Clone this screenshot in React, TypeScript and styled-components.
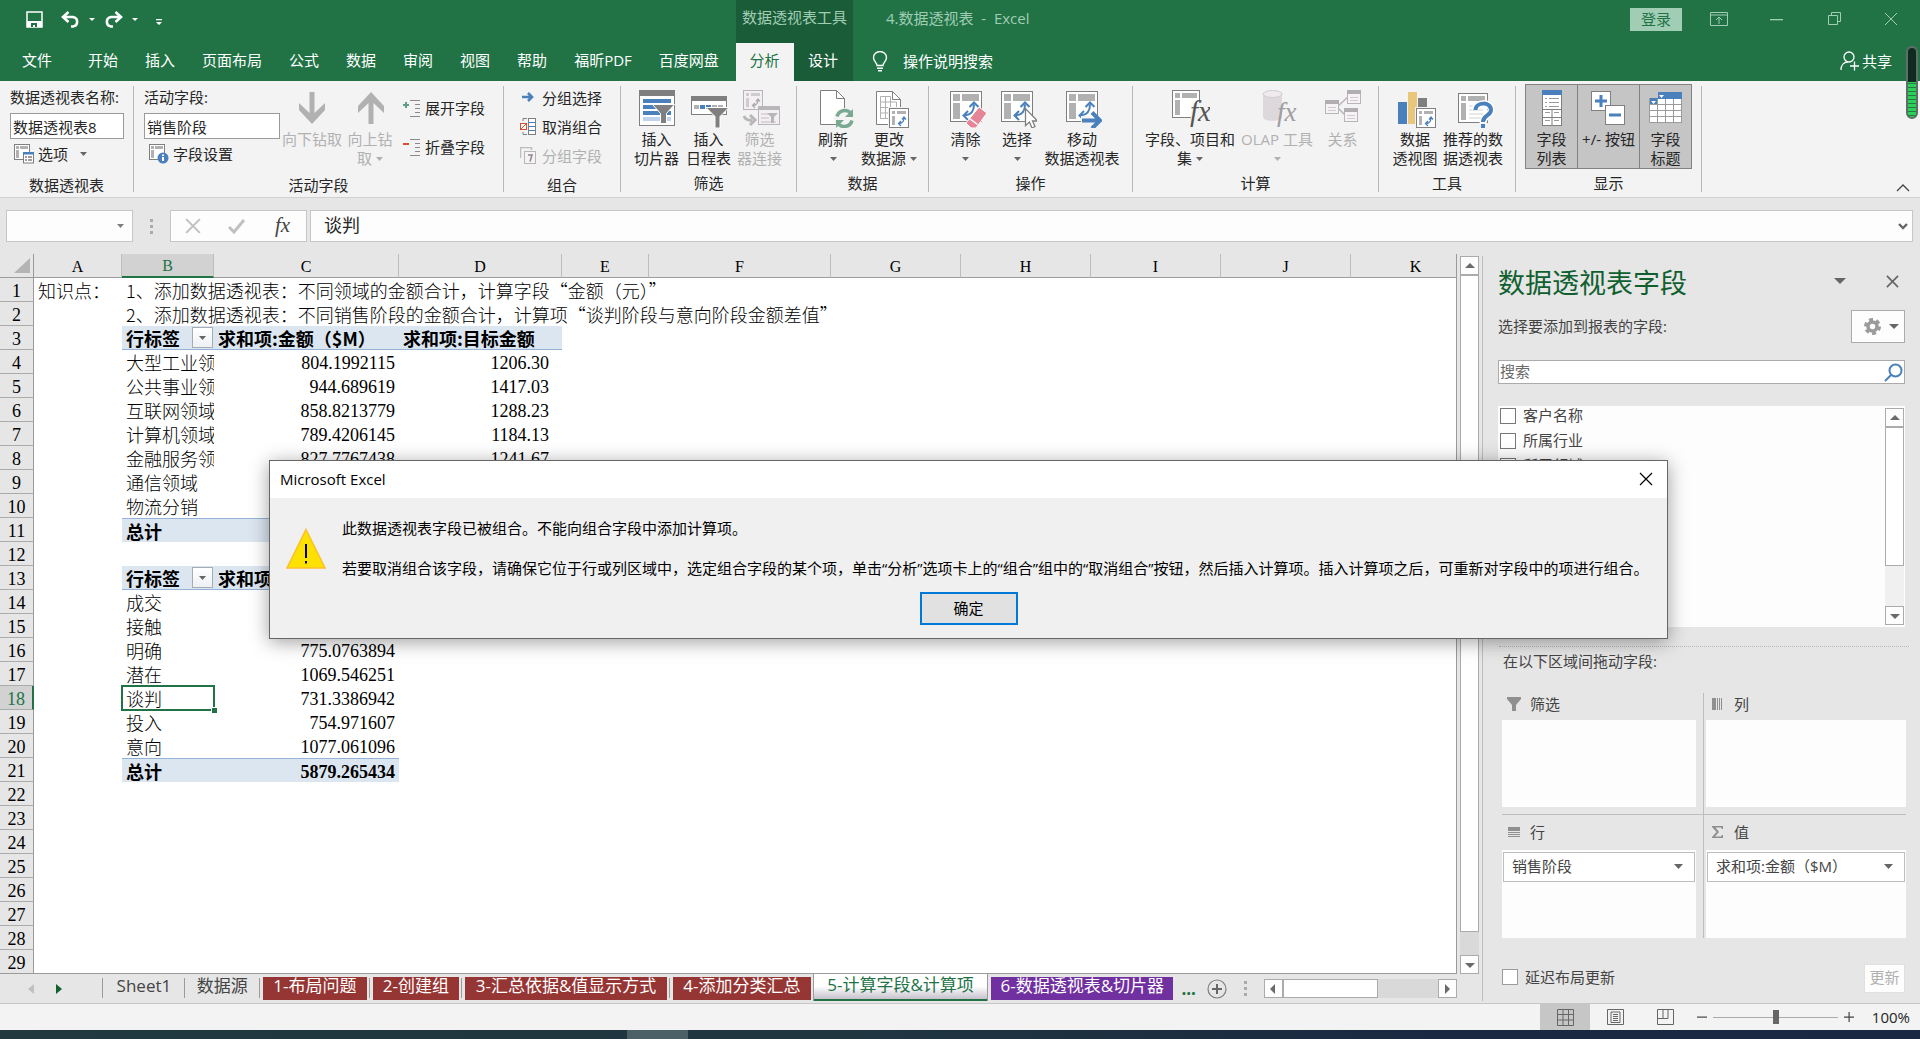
import React from "react";
import styled, { createGlobalStyle, css } from "styled-components";

const ui = `"Open Sans", "Noto Sans CJK SC", sans-serif`;
const cjk = `"Noto Sans CJK SC", sans-serif`;
const serif = `"Liberation Serif", "Noto Sans CJK SC", serif`;

const c = {
  green: "#217346",
  darkGreen: "#1b5c38",
  mint: "#a0cdb4",
  ribbon: "#f3f3f3",
  chrome: "#e6e6e6",
  line: "#ababab",
  text: "#262626",
  soft: "#444444",
  off: "#b1b1b1",
  grey: "#7f7f7f",
  blue: "#4a80bb",
  pivot: "#dce6f1",
  pivotLine: "#95b3d7",
};

const Global = createGlobalStyle`
  *, *::before, *::after { box-sizing: border-box; }
  body { margin: 0; font: 15px/20px ${ui}; color: ${c.text}; overflow: hidden; }
  button, input { font: inherit; color: inherit; }
  button { background: none; border: 0; padding: 0; white-space: nowrap; }
  svg { display: block; flex: none; }
`;

const Screen = styled.div`
  position: relative;
  display: flex;
  flex-direction: column;
  min-height: 100vh;
  background: ${c.chrome};
`;

/* ---------- header ---------- */

const Header = styled.header`
  display: grid;
  grid-template: 43px 38px / 736px 117px 1fr;
  background: ${c.green};
  color: #fff;
`;
const QuickAccess = styled.div`
  display: flex;
  align-items: center;
  padding: 0 0 4px 26px;
  gap: 9px;
  & > :first-child { margin-right: 9px; }
`;
const IconButton = styled.button`
  display: flex;
  align-items: center;
  justify-content: center;
`;
const ContextTitle = styled.div`
  background: ${c.darkGreen};
  color: ${c.mint};
  text-align: center;
  line-height: 34px;
`;
const TitleBar = styled.div`
  display: flex;
  align-items: center;
  padding: 0 22px 5px 33px;
  color: ${c.mint};
`;
const DocTitle = styled.span`
  flex: 1;
  padding-bottom: 2px;
  white-space: pre;
`;
const LoginButton = styled.button`
  background: ${c.mint};
  color: ${c.green};
  width: 52px;
  height: 23px;
  line-height: 22px;
`;
const WindowButtons = styled.div`
  display: flex;
  gap: 41px;
  margin-left: 28px;
`;
const Tabs = styled.nav`
  display: flex;
`;
const Tab = styled.button<{ $active?: boolean; $file?: boolean }>`
  padding: 0 14px 4px 13px;
  ${(p) => p.$file && "width: 75px;"}
  ${(p) => p.$active && `background: ${c.ribbon}; color: ${c.green};`}
`;
const ContextTabs = styled.div`
  display: grid;
  grid-template-columns: 58px 59px;
  background: ${c.darkGreen};
`;
const TellRow = styled.div`
  display: flex;
  align-items: center;
  justify-content: space-between;
  padding: 0 28px 2px 19px;
`;
const TellButton = styled.button`
  display: flex;
  align-items: center;
  gap: 15px;
`;
const ShareButton = styled(TellButton)`
  gap: 3px;
`;

/* ---------- ribbon ---------- */

const Ribbon = styled.section`
  display: flex;
  height: 117px;
  padding-top: 3px;
  background: ${c.ribbon};
  border-bottom: 1px solid #d0d0d0;
`;
const GroupBox = styled.div<{ $w: number }>`
  width: ${(p) => p.$w}px;
  display: flex;
  flex-direction: column;
`;
const GroupBody = styled.div<{ $pad: number }>`
  display: flex;
  height: 87px;
  padding-left: ${(p) => p.$pad}px;
`;
const GroupLabel = styled.div`
  text-align: center;
  line-height: 28px;
`;
const Sep = styled.div`
  width: 1px;
  margin: 2px 0 5px;
  background: #b8b8b8;
`;
const Big = styled.button<{ $w: number; $off?: boolean; $on?: boolean }>`
  width: ${(p) => p.$w}px;
  display: flex;
  flex-direction: column;
  align-items: center;
  padding-top: 6px;
  line-height: 19px;
  color: ${(p) => (p.$off ? c.off : c.text)};
  ${(p) =>
    p.$on &&
    css`
      background: #c5c5c5;
      border: 1px solid #828282;
      padding-top: 5px;
      & + & { margin-left: -1px; }
    `}
  & > svg { margin-bottom: 2px; }
`;
const BigLine = styled.span`
  display: flex;
  align-items: center;
  justify-content: center;
  gap: 4px;
  height: 19px;
`;
const Stack = styled.div<{ $w?: number; $pad?: number }>`
  display: flex;
  flex-direction: column;
  width: ${(p) => (p.$w ? p.$w + "px" : "auto")};
  padding-left: ${(p) => p.$pad ?? 0}px;
`;
const FieldLabel = styled.label`
  line-height: 26px;
  height: 30px;
  white-space: nowrap;
`;
const FieldInput = styled.input`
  width: 100%;
  height: 26px;
  padding: 0 2px;
  border: 1px solid #9a9a9a;
  background: #fff;
  outline: 0;
`;
const Small = styled.button<{ $off?: boolean; $h?: number; $gap?: number; $pad?: number }>`
  display: flex;
  align-items: center;
  gap: ${(p) => p.$gap ?? 4}px;
  height: ${(p) => p.$h ?? 29}px;
  padding: 0 0 2px ${(p) => p.$pad ?? 0}px;
  color: ${(p) => (p.$off ? c.off : c.text)};
`;
const SmallText = styled.span`
  margin-right: 8px;
`;
const Collapse = styled.button`
  margin: auto 10px 5px auto;
`;
const Meter = styled.div`
  position: absolute;
  top: 46px;
  right: 2px;
  width: 12px;
  height: 73px;
  border: 2px solid #5f6f67;
  border-radius: 6px;
  background:
    linear-gradient(#0f2b1f 34px, transparent 34px),
    repeating-linear-gradient(#2fd05a 0 3px, #1d7a44 3px 4px);
`;

/* ---------- formula bar ---------- */

const FormulaRow = styled.div`
  display: flex;
  height: 56px;
  padding: 12px 7px 12px 6px;
`;
const BarBox = styled.div`
  display: flex;
  align-items: center;
  background: #fdfdfd;
  border: 1px solid #c6c6c6;
`;
const NameBox = styled(BarBox)`
  width: 127px;
  padding-right: 8px;
`;
const Grip = styled.div`
  display: flex;
  flex-direction: column;
  justify-content: center;
  gap: 3px;
  width: 37px;
  align-items: center;
  & > i { width: 3px; height: 3px; background: #ababab; }
`;
const FxBox = styled(BarBox)`
  width: 137px;
  justify-content: space-between;
  padding: 0 15px 0 14px;
  margin-right: 3px;
`;
const FormulaBox = styled(BarBox)`
  flex: 1;
  padding: 0 4px 0 13px;
`;
const PlainInput = styled.input`
  flex: 1;
  min-width: 0;
  border: 0;
  padding: 0 0 2px;
  background: none;
  outline: 0;
  font-size: 18px;
  line-height: 26px;
`;

/* ---------- sheet ---------- */

const Workspace = styled.main`
  flex: 1;
  display: flex;
`;
const SheetSide = styled.section`
  flex: 1;
  min-width: 0;
  display: flex;
  flex-direction: column;
`;
const SheetRow = styled.div`
  display: flex;
  height: 720px;
`;
const GridFrame = styled.div`
  flex: 1;
  min-width: 0;
  overflow: hidden;
  background: #fff;
  border: solid #9b9b9b;
  border-width: 0 1px 1px 0;
`;
const Grid = styled.table`
  table-layout: fixed;
  width: 1481px;
  border-spacing: 0;
  font: 300 18px/22px ${cjk};
  color: #000;
`;
const Corner = styled.td`
  height: 24px;
  padding: 4px 3px 4px 14px;
  background: ${c.chrome};
  border: solid #9b9b9b;
  border-width: 0 1px 1px 0;
`;
const ColHead = styled.th<{ $on?: boolean }>`
  height: 24px;
  padding: 2px 0 0;
  font: 16px/20px ${serif};
  background: ${(p) => (p.$on ? "#d2d2d2" : c.chrome)};
  color: ${(p) => (p.$on ? c.green : "#000")};
  border-right: 1px solid #bdbdbd;
  border-bottom: ${(p) => (p.$on ? `2px solid ${c.green}` : "1px solid #9b9b9b")};
`;
const RowHead = styled.th<{ $on?: boolean }>`
  height: 24px;
  padding: 2px 0 0;
  font: 18px/20px ${serif};
  background: ${(p) => (p.$on ? "#d2d2d2" : c.chrome)};
  color: ${(p) => (p.$on ? c.green : "#000")};
  border-bottom: 1px solid #ababab;
  border-right: ${(p) => (p.$on ? `2px solid ${c.green}` : "1px solid #9b9b9b")};
`;
type CellKind = "head" | "total" | undefined;
const Cell = styled.td<{ $kind?: CellKind; $num?: boolean; $clip?: boolean; $indent?: boolean }>`
  height: 24px;
  padding: 0 ${(p) => (p.$indent ? 13 : 4)}px 0 4px;
  white-space: nowrap;
  overflow: ${(p) => (p.$clip ? "hidden" : "visible")};
  ${(p) => p.$num && `text-align: right; font-family: ${serif}; line-height: 20px; padding-top: 2px;`}
  ${(p) => p.$kind && `background: ${c.pivot}; font-weight: 700;`}
  ${(p) => p.$kind === "head" && `border-bottom: 1px solid ${c.pivotLine};`}
  ${(p) => p.$kind === "total" && `border-top: 1px solid ${c.pivotLine};`}
`;
const SelectedCell = styled(Cell)`
  position: relative;
  outline: 2px solid ${c.green};
  outline-offset: -1px;
  &::after {
    content: "";
    position: absolute;
    right: -3px;
    bottom: -3px;
    width: 6px;
    height: 6px;
    background: ${c.green};
    border: solid #fff;
    border-width: 1px 0 0 1px;
  }
`;
const HeadWithFilter = styled.div`
  display: flex;
  align-items: center;
  justify-content: space-between;
  height: 22px;
  margin-right: -3px;
`;
const FilterButton = styled.button`
  display: flex;
  align-items: center;
  justify-content: center;
  width: 21px;
  height: 21px;
  border: 1px solid #a6acb5;
  background: linear-gradient(#fff, #eef0f4);
`;
const VScroll = styled.div`
  display: flex;
  flex-direction: column;
  width: 19px;
  margin: 2px 3px 0;
  background: #d9d9d9;
`;
const ScrollButton = styled.button`
  display: flex;
  align-items: center;
  justify-content: center;
  width: 19px;
  height: 19px;
  flex: none;
  background: #fdfdfd;
  border: 1px solid #ababab;
`;
const ThumbV = styled.div<{ $grow: number }>`
  flex: ${(p) => p.$grow};
  background: #fff;
  border: 1px solid #ababab;
`;
const Track = styled.div<{ $grow: number }>`
  flex: ${(p) => p.$grow};
`;
const TabBar = styled.div`
  display: flex;
  flex: 1;
  padding: 0 25px 0 28px;
  font-size: 17px;
`;
const TabNav = styled.div`
  display: flex;
  gap: 22px;
  width: 75px;
  height: 29px;
  align-items: center;
`;
const SheetTab = styled.button<{ $w: number; $bg?: string }>`
  width: ${(p) => p.$w}px;
  height: 23px;
  margin: 3px 2px 0 3px;
  line-height: 17px;
  padding-bottom: 6px;
  color: ${(p) => (p.$bg ? "#fff" : c.soft)};
  background: ${(p) => p.$bg ?? "transparent"};
`;
const TabSep = styled.i`
  width: 1px;
  height: 20px;
  margin-top: 4px;
  background: #9b9b9b;
`;
const ActiveTab = styled.button`
  width: 177px;
  height: 27px;
  line-height: 20px;
  color: ${c.green};
  background: linear-gradient(#fff 45%, #bdb8c4);
  border: solid #9b9b9b;
  border-width: 0 1px 0;
  box-shadow: inset 0 -2px ${c.green};
  padding-bottom: 5px;
`;
const TabTools = styled.div`
  display: flex;
  align-items: center;
  flex: 1;
  height: 29px;
  padding-left: 6px;
  color: ${c.green};
  font-weight: 700;
`;
const NewSheet = styled(IconButton)`
  margin-left: 11px;
`;
const HScroll = styled.div`
  display: flex;
  width: 193px;
  height: 19px;
  margin-left: auto;
  background: #d9d9d9;
`;

/* ---------- field pane ---------- */

const Pane = styled.aside`
  width: 438px;
  margin: 2px 0;
  padding: 10px 15px 0;
  border-left: 1px solid #bdbdbd;
  color: ${c.soft};
`;
const PaneHead = styled.div`
  display: flex;
  align-items: center;
  height: 36px;
  padding-right: 6px;
`;
const PaneTools = styled.div`
  display: flex;
  align-items: center;
  gap: 40px;
  padding-bottom: 6px;
`;
const PaneTitle = styled.h2`
  flex: 1;
  margin: 0;
  font: 27px/34px ${ui};
  padding-bottom: 2px;
  color: #10602f;
`;
const PaneRow = styled.div`
  display: flex;
  align-items: center;
  justify-content: space-between;
  height: 33px;
  margin: 8px 0 17px;
`;
const PaneHint = styled.span`
  padding-bottom: 2px;
`;
const GearButton = styled.button`
  display: flex;
  align-items: center;
  justify-content: space-between;
  width: 54px;
  height: 33px;
  padding: 0 5px 0 12px;
  background: #fdfdfd;
  border: 1px solid #ababab;
`;
const SearchBox = styled.div`
  display: flex;
  align-items: center;
  height: 24px;
  padding: 0 1px;
  background: #fff;
  border: 1px solid #ababab;
  & > input { font-size: 15px; line-height: 20px; }
  & > input::placeholder { color: #6a6a6a; opacity: 1; }
`;
const FieldList = styled.div`
  display: flex;
  height: 221px;
  margin-top: 22px;
  padding: 0 1px 2px 2px;
  background: #fdfdfd;
`;
const Checks = styled.div`
  flex: 1;
`;
const Check = styled.label`
  display: flex;
  align-items: center;
  gap: 7px;
  height: 25px;
  padding-bottom: 8px;
`;
const Box = styled.input`
  appearance: none;
  width: 16px;
  height: 16px;
  margin: 3px 0 0;
  background: #fff;
  border: 1px solid #777;
`;
const ListScroll = styled(VScroll)`
  margin: 2px 0 0;
  background: #f0f0f0;
`;
const DragHint = styled.div`
  margin: 19px -4px 0 1px;
  padding: 4px 4px 0;
  height: 47px;
  border-top: 1px dotted #b8b8b8;
`;
const Areas = styled.div`
  display: grid;
  grid-template-columns: 201px 1fr;
  margin: 0 -1px 0 4px;
`;
const Area = styled.div<{ $right?: boolean; $bottom?: boolean }>`
  height: ${(p) => (p.$bottom ? 123 : 122)}px;
  padding: ${(p) => (p.$right ? "0 0 0 2px" : "0 7px 0 0")};
  border: solid #bdbdbd;
  border-width: 0 0 ${(p) => (p.$bottom ? 0 : 1)}px ${(p) => (p.$right ? 1 : 0)}px;
`;
const AreaHead = styled.div<{ $bottom?: boolean }>`
  display: flex;
  align-items: center;
  gap: 9px;
  height: ${(p) => (p.$bottom ? 35 : 27)}px;
  padding: 0 0 ${(p) => (p.$bottom ? 2 : 6)}px 5px;
`;
const AreaDrop = styled.div<{ $bottom?: boolean }>`
  height: ${(p) => (p.$bottom ? 88 : 87)}px;
  padding: 2px 1px;
  background: #fdfdfd;
`;
const AreaItem = styled.button`
  display: flex;
  align-items: center;
  justify-content: space-between;
  width: 100%;
  height: 30px;
  padding: 0 11px 2px 8px;
  background: #fff;
  border: 1px solid #bdbdbd;
`;
const Defer = styled.div`
  display: flex;
  align-items: center;
  justify-content: space-between;
  margin: 25px 0 0 4px;
  height: 30px;
  & > label { padding: 0 0 2px; height: 30px; }
  & input { margin: 0; border-color: #9b9b9b; }
`;
const UpdateButton = styled.button`
  width: 41px;
  height: 29px;
  padding-bottom: 2px;
  background: #fdfdfd;
  border: 1px solid #e0e0e0;
  color: ${c.off};
`;

/* ---------- status and task bars ---------- */

const Status = styled.footer`
  display: flex;
  align-items: stretch;
  justify-content: flex-end;
  height: 27px;
  padding-right: 10px;
  background: ${c.ribbon};
  border-top: 1px solid #c6c6c6;
`;
const View = styled.button<{ $on?: boolean }>`
  display: flex;
  align-items: center;
  justify-content: center;
  width: 50px;
  background: ${(p) => (p.$on ? "#c6c6c6" : "transparent")};
`;
const Zoom = styled.div`
  display: flex;
  align-items: center;
  gap: 6px;
  margin-left: 7px;
`;
const Slider = styled.input`
  appearance: none;
  width: 125px;
  height: 16px;
  margin: 0;
  background: linear-gradient(#ababab, #ababab) center / 100% 1px no-repeat;
  &::-webkit-slider-thumb {
    appearance: none;
    width: 6px;
    height: 14px;
    background: #666;
  }
`;
const Percent = styled.span`
  width: 50px;
  text-align: right;
`;
const TaskBar = styled.div`
  display: grid;
  grid-template-columns: 627fr 61fr 1232fr;
  height: 9px;
  background: linear-gradient(90deg, #21393f, #1f3540 45%, #1a2841 75%, #192743);
  & > :nth-child(2) { background: #4c6167; }
`;

/* ---------- dialog ---------- */

const Dialog = styled.div`
  position: absolute;
  left: 269px;
  top: 460px;
  width: 1399px;
  background: #f0f0f0;
  border: 1px solid #666;
  color: #000;
  box-shadow: 0 3px 18px rgba(0, 0, 0, 0.38);
`;
const DialogTitle = styled.div`
  display: flex;
  align-items: center;
  justify-content: space-between;
  height: 37px;
  padding: 0 14px 2px 10px;
  background: #fff;
`;
const DialogBody = styled.div`
  display: flex;
  gap: 16px;
  padding: 20px 0 0 16px;
  & > svg { margin-top: 10px; }
`;
const DialogText = styled.div`
  & > p { margin: 0 0 20px; white-space: nowrap; }
`;
const OkButton = styled.button`
  display: block;
  width: 98px;
  height: 33px;
  margin: -6px auto 13px;
  padding-bottom: 2px;
  background: #e1e1e1;
  border: 2px solid #0078d7;
`;

/* ---------- drawings ---------- */

const Caret = ({ color = "#666", w = 7 }: { color?: string; w?: number }) => (
  <svg width={w} height={Math.ceil(w / 2)} viewBox="0 0 8 4" preserveAspectRatio="none">
    <path d="M0 0h8L4 4z" fill={color} />
  </svg>
);
const Arrow = ({ dir, color = "#6a6a6a" }: { dir: "up" | "down" | "left" | "right"; color?: string }) => {
  const d = {
    up: "M0 7h10L5 2z",
    down: "M0 3h10L5 8z",
    left: "M7 0v10L2 5z",
    right: "M3 0v10L8 5z",
  }[dir];
  return (
    <svg width="10" height="10" viewBox="0 0 10 10">
      <path d={d} fill={color} />
    </svg>
  );
};
const Cross = ({ size, color, sw = 1 }: { size: number; color: string; sw?: number }) => (
  <svg width={size} height={size} viewBox="0 0 14 14">
    <path d="M1 1l12 12M13 1L1 13" stroke={color} strokeWidth={sw} fill="none" />
  </svg>
);
/* A 38px-high ribbon drawing; lead is blank canvas on its left side. */
const I38 = ({ children, w = 38, lead = 0 }: { children: React.ReactNode; w?: number; lead?: number }) => (
  <svg width={w + lead} height="38" viewBox={`${-lead} 0 ${w + lead} 38`} fill="none">
    {children}
  </svg>
);
const Frame = ({ off, w = 31, h = 30 }: { off?: boolean; w?: number; h?: number }) => (
  <>
    <rect x=".5" y="1.5" width={w} height={h} fill={off ? "#f3eff3" : "#fff"} stroke={off ? "#b9b6b9" : c.grey} />
    <path d={`M3 4h7v7H3zM12 4h${w - 14}v7H12zM3 13h7v${h - 14}H3z`} fill={off ? "#cfcccf" : "#b1b1b1"} />
  </>
);
const Swap = ({ color = c.blue }: { color?: string }) => (
  <path d="M15 25.500q9-1 9-11M19.500 17l4.500-4.500 4.500 4.500M18 21l-4.500 4.500L18 30" stroke={color} strokeWidth="2" />
);
const MiniPivot = ({ x, y, off }: { x: number; y: number; off?: boolean }) => (
  <g transform={`translate(${x} ${y})`}>
    <rect x=".5" y=".5" width="19" height="19" fill={off ? "#f3eff3" : "#fff"} stroke={off ? "#b9b6b9" : c.grey} />
    <path d="M3 3h3v3H3zM8 3h9v3H8zM3 8h3v9H3z" fill={off ? "#cfcccf" : "#b1b1b1"} />
    <path d="M10 15.500q5 0 5-6M13 11.500l2-2.500 2 2.500M12 13l-2.500 2.500L12 18" stroke={off ? "#aaa" : c.blue} strokeWidth="1.300" />
  </g>
);
const Fx = ({ x, y, size, color }: { x: number; y: number; size: number; color: string }) => (
  <text x={x} y={y} fontFamily="Liberation Serif, serif" fontStyle="italic" fontSize={size} fill={color}>
    fx
  </text>
);

const SlicerIcon = () => (
  <I38 w={36}>
    <rect x=".5" y=".5" width="35" height="35" fill="#fff" stroke={c.grey} />
    <path d="M0 0h36v6H0z" fill={c.grey} />
    <path d="M4 9h28v4H4zM4 15h28v4H4zM4 21h28v4H4z" fill={c.blue} />
    <path d="M4 27h28v4H4z" fill="#c0d3ec" />
    <path d="M13.500 14.500h22l-8 9v10h-6v-10z" fill={c.grey} stroke="#fff" />
  </I38>
);
const TimelineIcon = () => (
  <I38 lead={2}>
    <rect x=".5" y="6.500" width="35" height="18" fill="#fff" stroke={c.grey} />
    <path d="M0 6h36v5H0z" fill={c.grey} />
    <path d="M3 15h5v4H3zM21 15h5v4h-5zM27 15h5v4h-5z" fill="#b1b1b1" />
    <path d="M9 15h5v4H9zM15 15h5v4h-5z" fill={c.blue} />
    <path d="M15 17.500h23l-9 9V38h-5V26.500z" fill={c.grey} stroke="#fff" />
  </I38>
);
const ConnectIcon = () => (
  <I38 w={37} lead={4}>
    <MiniPivot x={0} y={0} off />
    <rect x="15.500" y="16.500" width="21" height="18" fill="#f3eff3" stroke="#b9b6b9" />
    <path d="M15 16h22v4H15z" fill="#b9b6b9" />
    <path d="M18 23h8v2h-8zM18 27h8v2h-8zM18 31h15v2H18z" fill="#dcd6dc" />
    <path d="M24 23h11l-4 4v6h-3v-6z" fill="#b9b6b9" />
    <path d="M1 26q2 5 8 4M7 25l5 5-5 5" stroke="#b9b6b9" strokeWidth="3" />
  </I38>
);
const RefreshIcon = () => (
  <I38 w={34} lead={8}>
    <path d="M.5.5h16l8 8v26H.5z" fill="#fff" stroke={c.grey} />
    <path d="M16.500.5v8h8" stroke={c.grey} />
    <circle cx="24.500" cy="28.500" r="10.500" fill="#f3f3f3" />
    <path d="M17 26.500a8 8 0 0 1 14-3M32 30.500a8 8 0 0 1-14 3" stroke="#78a992" strokeWidth="3.500" />
    <path d="M33 19v8h-8zM16 38v-8h8z" fill="#78a992" />
  </I38>
);
const SourceIcon = () => (
  <I38 w={34} lead={8}>
    <path d="M.5 1.500h16l8 8v25H.5z" fill="#fff" stroke={c.grey} />
    <path d="M16.500 1.500v8h8" stroke={c.grey} />
    <path d="M4.500 6.500h10v22h-10zM4.500 12h16M4.500 17.500h16M4.500 23h16M9.500 6.500v22M14.500 12v16M20.500 12v8" stroke="#b1b1b1" />
    <path d="M12 17h22v21H12z" fill="#f3f3f3" />
    <MiniPivot x={13} y={18} />
  </I38>
);
const ClearIcon = () => (
  <I38 w={37} lead={5}>
    <Frame />
    <Swap />
    <path d="M29 17l8 6-11 15h-5l-5-5z" fill="#e68598" stroke="#fff" />
    <path d="M19.500 28.500l8 6" stroke="#fff" strokeWidth="1.500" />
  </I38>
);
const SelectIcon = () => (
  <I38 w={36} lead={4}>
    <Frame />
    <Swap />
    <path d="M24.500 18.500v17l4-3.500 2.500 6 3-1.500-2.500-5.500h5z" fill="#fff" stroke={c.grey} strokeWidth="1.300" />
  </I38>
);
const MoveIcon = () => (
  <I38 w={36} lead={4}>
    <Frame />
    <Swap />
    <path d="M15 26h10v9H15z" fill="#f3f3f3" />
    <path d="M16 30.500h17M26 22.500l8 8-8 8" stroke={c.blue} strokeWidth="4" />
  </I38>
);
const FieldsIcon = () => (
  <I38 lead={2}>
    <rect x=".5" y=".5" width="27" height="27" fill="#fff" stroke={c.grey} />
    <path d="M3 3h5v5H3zM10 3h15v5H10zM3 10h5v15H3z" fill="#b1b1b1" />
    <path d="M20 13h18v25H18z" fill={c.ribbon} />
    <Fx x={18} y={31} size={29} color="#555" />
  </I38>
);
const OlapIcon = () => (
  <I38 w={34} lead={6}>
    <path d="M0 4v23c0 5 19 5 19 0V4z" fill="#dcd8dc" />
    <ellipse cx="9.500" cy="4" rx="9.500" ry="3.500" fill="#eeeaee" stroke="#d0ccd0" />
    <Fx x={14} y={31} size={27} color="#a09da0" />
  </I38>
);
const RelationIcon = () => (
  <I38 w={37} lead={2}>
    <path d="M12 17L24 6M12 17l10 10" stroke="#b9b6b9" strokeWidth="1.500" />
    {[[0, 10], [22, 0], [19, 18]].map(([x, y]) => (
      <g key={x}>
        <rect x={x + 0.5} y={y + 0.5} width="13" height="13" fill="#f6f2f6" stroke="#b9b6b9" />
        <path d={`M${x} ${y}h14v4h-14z`} fill="#b1adb1" />
        <path d={`M${x + 3} ${y + 7.5}h8M${x + 3} ${y + 10.5}h8`} stroke="#cfcccf" />
      </g>
    ))}
  </I38>
);
const ChartIcon = () => (
  <I38 lead={3}>
    <path d="M0 12h9v22H0z" fill={c.blue} />
    <path d="M10 2h9v32h-9z" fill="#eac57c" />
    <path d="M20 8h9v9h-9z" fill={c.grey} />
    <path d="M17 17h21v21H17z" fill="#f3f3f3" />
    <MiniPivot x={18} y={18} />
  </I38>
);
const RecommendIcon = () => (
  <I38 w={36} lead={6}>
    <rect x=".5" y="3.500" width="29" height="29" fill="#fff" stroke={c.grey} />
    <path d="M3 6h5v5H3zM10 6h17v5H10zM3 13h5v17H3z" fill="#b1b1b1" />
    <path d="M11 16h14M11 20h14M11 24h14M11 28h14" stroke="#d0d0d0" />
    <path d="M17 20c0-8 16-9 16 0 0 6-8 5-8 13" stroke="#fff" strokeWidth="7" />
    <path d="M17.500 20c0-8 15.500-9 15.500 0 0 6-8 5-8 12" stroke={c.blue} strokeWidth="4" />
    <path d="M23 34h4v4h-4z" fill={c.blue} />
  </I38>
);
const ListIcon = () => (
  <I38 w={20}>
    <rect x=".5" y=".5" width="19" height="35" fill="#fff" stroke={c.grey} />
    <path d="M0 0h20v5H0z" fill={c.blue} />
    <path d="M3 8.500h2M7 8.500h10M3 12.500h2M7 12.500h10M3 16.500h2M7 16.500h10M3 22.500h5M12 22.500h5M3 30.500h5M12 30.500h5" stroke="#9b9b9b" />
    <path d="M0 19.500h20M0 27.500h20M10 19.500v16" stroke={c.grey} />
  </I38>
);
const PlusMinusIcon = () => (
  <I38 w={35}>
    <rect x=".5" y="1.500" width="19" height="19" fill="#fff" stroke={c.grey} />
    <path d="M4 11h12M10 5v12" stroke={c.blue} strokeWidth="3" />
    <rect x="14.500" y="15.500" width="19" height="19" fill="#fff" stroke={c.grey} />
    <path d="M18 25h12" stroke={c.blue} strokeWidth="3" />
  </I38>
);
const HeadersIcon = () => (
  <I38 w={34}>
    <path d="M0 8h9V2h24v30H0z" fill="#fff" />
    <path d="M0 8h9V2h24v7H9v6H0z" fill={c.blue} />
    <path d="M.5 14.500h32M.5 20.500h32M.5 26.500h32M.5 32.500h32M.5 8v24M8.500 9v24M16.500 9v24M24.500 9v24M32.500 9v24" stroke="#9b9b9b" />
    <path d="M10 5h5l-2.500 3zM2 11h5l-2.500 3z" fill="#fff" />
  </I38>
);
const DrillIcon = ({ up }: { up?: boolean }) => (
  <I38 w={26} lead={up ? 2 : 0}>
    <path d={up ? "M10.500 34V13L0 23v-7L13 2l13 14v7L15.500 13v21z" : "M10.500 2v21L0 13v7l13 14 13-14v-7L15.500 23V2z"} fill="#b1b1b1" />
  </I38>
);
const ExpandIcon = ({ minus }: { minus?: boolean }) => (
  <svg width="18" height="17" viewBox="0 0 18 17" fill="none">
    <path d="M7 .5h10M12 4.500h5M12 8.500h5M12 12.500h5M7 16.500h10" stroke="#8a8a8a" />
    {minus ? <path d="M0 5h6" stroke="#d8502f" strokeWidth="2" /> : <path d="M0 5h6M3 2v6" stroke="#5d9f82" strokeWidth="2" />}
  </svg>
);
const OptionsIcon = ({ info }: { info?: boolean }) => (
  <svg width="20" height="20" viewBox="0 0 20 20" fill="none">
    <rect x=".5" y=".5" width="15" height="15" fill="#fff" stroke={c.grey} />
    <path d="M2 2h3v3H2zM6 2h8v3H6zM2 6h3v8H2z" fill="#b1b1b1" />
    {info ? (
      <>
        <circle cx="14" cy="14" r="5.500" fill={c.blue} />
        <path d="M14 13v4M14 10.500v1.500" stroke="#fff" strokeWidth="2" />
      </>
    ) : (
      <>
        <rect x="9.500" y="8.500" width="10" height="10.500" fill="#fff" stroke={c.grey} />
        <path d="M9 8h11v2.500H9z" fill={c.blue} />
        <path d="M11 13h2M14 13h4M11 16h2M14 16h4" stroke={c.grey} strokeWidth="1.500" />
      </>
    )}
  </svg>
);
const GroupIcon = ({ kind }: { kind: "go" | "un" | "field" }) => (
  <svg width="16" height="17" viewBox="0 0 16 17" fill="none">
    {kind === "go" && <path d="M2 8h10M8 4l4 4-4 4" stroke={c.blue} strokeWidth="2.600" />}
    {kind === "un" && (
      <>
        <path d="M3 3V.5h4M3 14v2.500h4" stroke={c.grey} />
        <rect x="8.500" y=".5" width="7" height="16" fill="#fff" stroke={c.grey} />
        <path d="M9 4.500h6M9 8.500h6M9 12.500h6" stroke={c.blue} />
        <rect x=".5" y="5.500" width="6" height="6" fill="#fff" stroke="#d8502f" />
        <path d="M1 11l5-5" stroke="#d8502f" />
      </>
    )}
    {kind === "field" && (
      <>
        <path d="M.5 11V.5h11V3" stroke="#c0bdc0" strokeWidth="1.500" />
        <rect x="4.500" y="4.500" width="11" height="12" fill="#f6f2f6" stroke="#b9b6b9" />
        <path d="M8 8h4l-2 6.500" stroke="#8a888a" strokeWidth="1.500" />
      </>
    )}
  </svg>
);

/* ---------- composed parts ---------- */

const Group = ({ w, pad = 0, label, children }: { w: number; pad?: number; label: string; children: React.ReactNode }) => (
  <>
    <GroupBox $w={w}>
      <GroupBody $pad={pad}>{children}</GroupBody>
      <GroupLabel>{label}</GroupLabel>
    </GroupBox>
    <Sep />
  </>
);
const BigButton = ({
  w, icon, lines, caret, off, on,
}: { w: number; icon: React.ReactNode; lines: string[]; caret?: boolean; off?: boolean; on?: boolean }) => (
  <Big $w={w} $off={off} $on={on} disabled={off}>
    {icon}
    {lines.map((t, i) => (
      <BigLine key={i}>
        {t}
        {caret && i === lines.length - 1 && <Caret color={off ? c.off : "#666"} />}
      </BigLine>
    ))}
  </Big>
);

const letters = "ABCDEFGHIJK".split("");
const widths = [88, 92, 185, 163, 87, 182, 130, 130, 130, 130, 130];

type Row = { a?: string; b?: string; cc?: string; d?: string; kind?: CellKind; wide?: boolean };
const rows: Row[] = [
  { a: "知识点：", b: "1、添加数据透视表：不同领域的金额合计，计算字段“金额（元）”", wide: true },
  { b: "2、添加数据透视表：不同销售阶段的金额合计，计算项“谈判阶段与意向阶段金额差值”", wide: true },
  { b: "行标签", cc: "求和项:金额（$M）", d: "求和项:目标金额", kind: "head" },
  { b: "大型工业领域", cc: "804.1992115", d: "1206.30" },
  { b: "公共事业领域", cc: "944.689619", d: "1417.03" },
  { b: "互联网领域", cc: "858.8213779", d: "1288.23" },
  { b: "计算机领域", cc: "789.4206145", d: "1184.13" },
  { b: "金融服务领域", cc: "827.7767438", d: "1241.67" },
  { b: "通信领域" },
  { b: "物流分销" },
  { b: "总计", kind: "total" },
  {},
  { b: "行标签", cc: "求和项:金额（$M）", kind: "head" },
  { b: "成交" },
  { b: "接触" },
  { b: "明确", cc: "775.0763894" },
  { b: "潜在", cc: "1069.546251" },
  { b: "谈判", cc: "731.3386942" },
  { b: "投入", cc: "754.971607" },
  { b: "意向", cc: "1077.061096" },
  { b: "总计", cc: "5879.265434", kind: "total" },
  ...Array.from({ length: 8 }, () => ({})),
];

const SheetRowView = ({ row, n }: { row: Row; n: number }) => {
  const on = n === 18;
  const head = row.kind === "head";
  return (
    <tr>
      <RowHead $on={on} scope="row">{n}</RowHead>
      <Cell>{row.a}</Cell>
      {on ? (
        <SelectedCell>{row.b}</SelectedCell>
      ) : (
        <Cell $kind={row.kind} $clip={!row.wide}>
          {head ? (
            <HeadWithFilter>
              {row.b}
              <FilterButton aria-label="筛选行标签"><Caret /></FilterButton>
            </HeadWithFilter>
          ) : row.b}
        </Cell>
      )}
      <Cell $kind={row.kind} $num={!head}>{row.cc}</Cell>
      <Cell $kind={n < 12 ? row.kind : undefined} $num={!head} $indent={!head}>{row.d}</Cell>
      {letters.slice(4).map((l) => <Cell key={l} />)}
    </tr>
  );
};

const areaIcons = {
  filter: <path d="M0 0h14v2L9 8v6H5V8L0 2z" fill="#8f8f8f" />,
  cols: <path d="M1 1h4v12H1zM6 1h1v12H6zM8 1h1v12H8zM10 1h1v12h-1z" fill="#8f8f8f" />,
  rowsIcon: <path d="M1 2h12v4H1zM1 7h12v1H1zM1 9h12v1H1zM1 11h12v1H1z" fill="#8f8f8f" />,
  sum: <path d="M1 1h11v3h-1l-1-1.500H4.500L8 7l-4 4.500h6L11 10h1v3H1v-1l4.500-5L1 2z" fill="#8f8f8f" />,
};
const AreaIcon = ({ k }: { k: keyof typeof areaIcons }) => (
  <svg width="14" height="14" viewBox="0 0 14 14">{areaIcons[k]}</svg>
);

export default function App() {
  return (
    <Screen>
      <Global />
      <Header>
        <QuickAccess>
          <IconButton aria-label="保存">
            <svg width="17" height="17" viewBox="0 0 17 17" fill="none">
              <path d="M1 1h15v15H1z" stroke="#fff" strokeWidth="1.500" />
              <path d="M1 10h15v6H1z" fill="#fff" />
              <path d="M5 12h6v4H9v-2H7v2H5z" fill={c.green} />
            </svg>
          </IconButton>
          <IconButton aria-label="撤消">
            <svg width="19" height="17" viewBox="0 0 19 17" fill="none">
              <path d="M2 6h10a4.800 4.800 0 0 1 0 9.500h-2M7.500 1L2 6l5.500 5" stroke="#fff" strokeWidth="2.600" />
            </svg>
          </IconButton>
          <Caret color="#fff" w={6} />
          <IconButton aria-label="恢复">
            <svg width="19" height="17" viewBox="0 0 19 17" fill="none">
              <path d="M17 6H7a4.800 4.800 0 0 0 0 9.500h2M11.500 1L17 6l-5.500 5" stroke="#fff" strokeWidth="2.600" />
            </svg>
          </IconButton>
          <Caret color="#fff" w={6} />
          <IconButton aria-label="自定义快速访问工具栏">
            <svg width="20" height="12" viewBox="0 0 20 12">
              <path d="M9 5h6v1.200H9zM9 8h6l-3 3z" fill="#fff" />
            </svg>
          </IconButton>
        </QuickAccess>
        <ContextTitle>数据透视表工具</ContextTitle>
        <TitleBar>
          <DocTitle>4.数据透视表  -  Excel</DocTitle>
          <LoginButton>登录</LoginButton>
          <WindowButtons>
            <IconButton aria-label="功能区显示选项">
              <svg width="18" height="14" viewBox="0 0 18 14" fill="none" stroke={c.mint}>
                <path d="M.5.500h17v13H.5zM.5 3h17M9 12V5.500M6 8l3-3 3 3" />
              </svg>
            </IconButton>
            <IconButton aria-label="最小化">
              <svg width="16" height="14" viewBox="0 0 16 14"><path d="M1 7h13v1.300H1z" fill={c.mint} /></svg>
            </IconButton>
            <IconButton aria-label="还原">
              <svg width="17" height="14" viewBox="0 0 17 14" fill="none" stroke={c.mint}>
                <path d="M2.500 3.500h9v9h-9zM5.500 3V.5h9v9H12" />
              </svg>
            </IconButton>
            <IconButton aria-label="关闭"><Cross size={14} color={c.mint} /></IconButton>
          </WindowButtons>
        </TitleBar>
        <Tabs>
          <Tab $file>文件</Tab>
          {["开始", "插入", "页面布局", "公式", "数据", "审阅", "视图", "帮助", "福昕PDF", "百度网盘"].map((t) => (
            <Tab key={t}>{t}</Tab>
          ))}
        </Tabs>
        <ContextTabs>
          <Tab $active>分析</Tab>
          <Tab>设计</Tab>
        </ContextTabs>
        <TellRow>
          <TellButton>
            <svg width="16" height="21" viewBox="0 0 16 21" fill="none" stroke="#fff" strokeWidth="1.400">
              <path d="M5 14.500c0-3-3.500-4-3.500-8a6.500 6 0 0 1 13 0c0 4-3.500 5-3.500 8zM5 17.300h6M6 19.800h4" />
            </svg>
            操作说明搜索
          </TellButton>
          <ShareButton>
            <svg width="19" height="20" viewBox="0 0 19 20" fill="none" stroke="#fff" strokeWidth="1.300">
              <circle cx="9" cy="6" r="5" />
              <path d="M1 19c0-5 3-8 7-8M10 15h9M14.500 10.500v9" />
            </svg>
            共享
          </ShareButton>
        </TellRow>
      </Header>

      <Ribbon>
        <Group w={133} pad={10} label="数据透视表">
          <Stack $w={114}>
            <FieldLabel htmlFor="pt-name">数据透视表名称:</FieldLabel>
            <FieldInput id="pt-name" defaultValue="数据透视表8" />
            <Small $h={33} $pad={4}>
              <OptionsIcon />
              <SmallText>选项</SmallText>
              <Caret />
            </Small>
          </Stack>
        </Group>
        <Group w={369} pad={10} label="活动字段">
          <Stack $w={136}>
            <FieldLabel htmlFor="field-name">活动字段:</FieldLabel>
            <FieldInput id="field-name" defaultValue="销售阶段" />
            <Small $h={33} $pad={5}><OptionsIcon info />字段设置</Small>
          </Stack>
          <BigButton w={64} off icon={<DrillIcon />} lines={["向下钻取"]} />
          <BigButton w={54} off caret icon={<DrillIcon up />} lines={["向上钻", "取"]} />
          <Stack $pad={6}>
            <Small $h={50}><ExpandIcon />展开字段</Small>
            <Small $h={28}><ExpandIcon minus />折叠字段</Small>
          </Stack>
        </Group>
        <Group w={116} pad={16} label="组合">
          <Stack>
            <Small $gap={6}><GroupIcon kind="go" />分组选择</Small>
            <Small $gap={6}><GroupIcon kind="un" />取消组合</Small>
            <Small $gap={6} $off disabled><GroupIcon kind="field" />分组字段</Small>
          </Stack>
        </Group>
        <Group w={175} pad={9} label="筛选">
          <BigButton w={53} icon={<SlicerIcon />} lines={["插入", "切片器"]} />
          <BigButton w={53} icon={<TimelineIcon />} lines={["插入", "日程表"]} />
          <BigButton w={51} off icon={<ConnectIcon />} lines={["筛选", "器连接"]} />
        </Group>
        <Group w={131} pad={7} label="数据">
          <BigButton w={58} caret icon={<RefreshIcon />} lines={["刷新", ""]} />
          <BigButton w={56} caret icon={<SourceIcon />} lines={["更改", "数据源"]} />
        </Group>
        <Group w={203} pad={10} label="操作">
          <BigButton w={53} caret icon={<ClearIcon />} lines={["清除", ""]} />
          <BigButton w={52} caret icon={<SelectIcon />} lines={["选择", ""]} />
          <BigButton w={80} icon={<MoveIcon />} lines={["移动", "数据透视表"]} />
        </Group>
        <Group w={245} pad={10} label="计算">
          <BigButton w={94} caret icon={<FieldsIcon />} lines={["字段、项目和", "集"]} />
          <BigButton w={82} off caret icon={<OlapIcon />} lines={["OLAP 工具", ""]} />
          <BigButton w={51} off icon={<RelationIcon />} lines={["关系"]} />
        </Group>
        <Group w={136} pad={12} label="工具">
          <BigButton w={48} icon={<ChartIcon />} lines={["数据", "透视图"]} />
          <BigButton w={70} icon={<RecommendIcon />} lines={["推荐的数", "据透视表"]} />
        </Group>
        <Group w={185} pad={9} label="显示">
          <BigButton w={53} on icon={<ListIcon />} lines={["字段", "列表"]} />
          <BigButton w={63} on icon={<PlusMinusIcon />} lines={["+/- 按钮"]} />
          <BigButton w={53} on icon={<HeadersIcon />} lines={["字段", "标题"]} />
        </Group>
        <Collapse aria-label="折叠功能区">
          <svg width="14" height="8" viewBox="0 0 14 8" fill="none">
            <path d="M1 7l6-6 6 6" stroke="#444" strokeWidth="1.300" />
          </svg>
        </Collapse>
      </Ribbon>

      <FormulaRow>
        <NameBox>
          <PlainInput aria-label="名称框" />
          <Caret color={c.grey} />
        </NameBox>
        <Grip><i /><i /><i /></Grip>
        <FxBox>
          <IconButton aria-label="取消"><Cross size={16} color="#c0c0c0" sw={1.8} /></IconButton>
          <IconButton aria-label="输入">
            <svg width="18" height="16" viewBox="0 0 18 16" fill="none">
              <path d="M1 9l5 5L16 2" stroke="#c0c0c0" strokeWidth="3" />
            </svg>
          </IconButton>
          <IconButton aria-label="插入函数">
            <svg width="18" height="24" viewBox="0 0 18 24"><Fx x={2} y={18} size={21} color="#444" /></svg>
          </IconButton>
        </FxBox>
        <FormulaBox>
          <PlainInput aria-label="编辑栏" defaultValue="谈判" />
          <svg width="10" height="7" viewBox="0 0 10 7" fill="none">
            <path d="M1 1l4 4 4-4" stroke="#666" strokeWidth="2.400" />
          </svg>
        </FormulaBox>
      </FormulaRow>

      <Workspace>
        <SheetSide>
          <SheetRow>
            <GridFrame>
              <Grid>
                <colgroup>
                  <col width={34} />
                  {widths.map((w, i) => <col key={i} width={w} />)}
                </colgroup>
                <thead>
                  <tr>
                    <Corner>
                      <svg width="16" height="15" viewBox="0 0 16 15"><path d="M16 0v15H0z" fill="#b4b4b4" /></svg>
                    </Corner>
                    {letters.map((l) => <ColHead key={l} $on={l === "B"} scope="col">{l}</ColHead>)}
                  </tr>
                </thead>
                <tbody>
                  {rows.map((r, i) => <SheetRowView key={i} row={r} n={i + 1} />)}
                </tbody>
              </Grid>
            </GridFrame>
            <VScroll>
              <ScrollButton aria-label="向上滚动"><Arrow dir="up" /></ScrollButton>
              <ThumbV $grow={658} />
              <Track $grow={23} />
              <ScrollButton aria-label="向下滚动"><Arrow dir="down" /></ScrollButton>
            </VScroll>
          </SheetRow>
          <TabBar>
            <TabNav>
              <IconButton aria-label="上一个工作表">
                <svg width="6" height="10" viewBox="0 0 6 10"><path d="M6 0v10L0 5z" fill="#c0c0c0" /></svg>
              </IconButton>
              <IconButton aria-label="下一个工作表">
                <svg width="6" height="10" viewBox="0 0 6 10"><path d="M0 0v10l6-5z" fill="#10602f" /></svg>
              </IconButton>
            </TabNav>
            <TabSep />
            <SheetTab $w={76}>Sheet1</SheetTab>
            <TabSep />
            <SheetTab $w={70}>数据源</SheetTab>
            <TabSep />
            <SheetTab $w={105} $bg="#963634">1-布局问题</SheetTab>
            <TabSep />
            <SheetTab $w={87} $bg="#963634">2-创建组</SheetTab>
            <TabSep />
            <SheetTab $w={204} $bg="#963634">3-汇总依据&amp;值显示方式</SheetTab>
            <TabSep />
            <SheetTab $w={139} $bg="#963634">4-添加分类汇总</SheetTab>
            <ActiveTab>5-计算字段&amp;计算项</ActiveTab>
            <SheetTab $w={184} $bg="#7030a0">6-数据透视表&amp;切片器</SheetTab>
            <TabTools>
              ...
              <NewSheet aria-label="新工作表">
                <svg width="20" height="20" viewBox="0 0 20 20" fill="none">
                  <circle cx="10" cy="10" r="9" stroke={c.grey} strokeWidth="1.200" />
                  <path d="M5 10h10M10 5v10" stroke="#666" strokeWidth="2" />
                </svg>
              </NewSheet>
              <Grip><i /><i /><i /></Grip>
              <HScroll>
                <ScrollButton aria-label="向左滚动"><Arrow dir="left" /></ScrollButton>
                <ThumbV $grow={94} />
                <Track $grow={61} />
                <ScrollButton aria-label="向右滚动"><Arrow dir="right" /></ScrollButton>
              </HScroll>
            </TabTools>
          </TabBar>
        </SheetSide>

        <Pane>
          <PaneHead>
            <PaneTitle>数据透视表字段</PaneTitle>
            <PaneTools>
              <IconButton aria-label="任务窗格选项"><Caret w={12} /></IconButton>
              <IconButton aria-label="关闭窗格"><Cross size={13} color="#666" sw={1.8} /></IconButton>
            </PaneTools>
          </PaneHead>
          <PaneRow>
            <PaneHint>选择要添加到报表的字段:</PaneHint>
            <GearButton aria-label="工具">
              <svg width="17" height="17" viewBox="0 0 17 17" fill="none">
                <circle cx="8.500" cy="8.500" r="4.500" stroke="#9b9b9b" strokeWidth="3.500" />
                <circle cx="8.500" cy="8.500" r="7" stroke="#9b9b9b" strokeWidth="3" strokeDasharray="4 3.330" />
              </svg>
              <Caret w={10} />
            </GearButton>
          </PaneRow>
          <SearchBox>
            <PlainInput aria-label="搜索字段" placeholder="搜索" />
            <svg width="19" height="19" viewBox="0 0 19 19" fill="none" stroke={c.blue} strokeWidth="2">
              <circle cx="11.500" cy="7.500" r="6" />
              <path d="M7 12l-6 6" />
            </svg>
          </SearchBox>
          <FieldList>
            <Checks>
              {["客户名称", "所属行业", "所属领域"].map((t) => (
                <Check key={t}><Box type="checkbox" />{t}</Check>
              ))}
            </Checks>
            <ListScroll>
              <ScrollButton aria-label="列表向上滚动"><Arrow dir="up" /></ScrollButton>
              <ThumbV $grow={139} />
              <Track $grow={40} />
              <ScrollButton aria-label="列表向下滚动"><Arrow dir="down" /></ScrollButton>
            </ListScroll>
          </FieldList>
          <DragHint>在以下区域间拖动字段:</DragHint>
          <Areas>
            <Area>
              <AreaHead><AreaIcon k="filter" />筛选</AreaHead>
              <AreaDrop />
            </Area>
            <Area $right>
              <AreaHead><AreaIcon k="cols" />列</AreaHead>
              <AreaDrop />
            </Area>
            <Area $bottom>
              <AreaHead $bottom><AreaIcon k="rowsIcon" />行</AreaHead>
              <AreaDrop $bottom><AreaItem>销售阶段<Caret w={9} /></AreaItem></AreaDrop>
            </Area>
            <Area $right $bottom>
              <AreaHead $bottom><AreaIcon k="sum" />值</AreaHead>
              <AreaDrop $bottom><AreaItem>求和项:金额（$M）<Caret w={9} /></AreaItem></AreaDrop>
            </Area>
          </Areas>
          <Defer>
            <Check><Box type="checkbox" />延迟布局更新</Check>
            <UpdateButton disabled>更新</UpdateButton>
          </Defer>
        </Pane>
      </Workspace>

      <Status>
        <View $on aria-label="普通">
          <svg width="17" height="17" viewBox="0 0 17 17" fill="none" stroke="#666">
            <path d="M.5.5h16v16H.5zM.5 5.500h16M.5 11h16M6 .5v16M11.500.5v16" />
          </svg>
        </View>
        <View aria-label="页面布局">
          <svg width="17" height="16" viewBox="0 0 17 16" fill="none" stroke="#666">
            <path d="M.5.5h16v15H.5zM4 3h9v10.500H4zM6 5.500h5M6 7.500h5M6 9.500h5M6 11.500h5" />
          </svg>
        </View>
        <View aria-label="分页预览">
          <svg width="17" height="16" viewBox="0 0 17 16" fill="none" stroke="#666">
            <path d="M.5.500h16v15H.5zM.5 9.500h10.500M6 .5v9M11 .5v9" />
          </svg>
        </View>
        <Zoom>
          <IconButton aria-label="缩小">
            <svg width="10" height="10" viewBox="0 0 10 10"><path d="M0 4.500h10v1.200H0z" fill="#444" /></svg>
          </IconButton>
          <Slider type="range" min={0} max={100} defaultValue={50} aria-label="缩放" />
          <IconButton aria-label="放大">
            <svg width="10" height="10" viewBox="0 0 10 10"><path d="M0 4.500h10v1.200H0zM4.500 0h1.200v10H4.500z" fill="#444" /></svg>
          </IconButton>
          <Percent>100%</Percent>
        </Zoom>
      </Status>
      <TaskBar><i /><i /><i /></TaskBar>

      <Meter />

      <Dialog role="alertdialog" aria-label="Microsoft Excel">
        <DialogTitle>
          Microsoft Excel
          <IconButton aria-label="关闭对话框"><Cross size={14} color="#000" sw={1.2} /></IconButton>
        </DialogTitle>
        <DialogBody>
          <svg width="40" height="41" viewBox="0 0 40 41">
            <path d="M20 1.500L39 40H1z" fill="#fde100" stroke="#fbc02d" strokeWidth="1.500" />
            <path d="M19 16h2v14h-2zM19 33h2v2.500h-2z" fill="#000" />
          </svg>
          <DialogText>
            <p>此数据透视表字段已被组合。不能向组合字段中添加计算项。</p>
            <p>若要取消组合该字段，请确保它位于行或列区域中，选定组合字段的某个项，单击“分析”选项卡上的“组合”组中的“取消组合”按钮，然后插入计算项。插入计算项之后，可重新对字段中的项进行组合。</p>
          </DialogText>
        </DialogBody>
        <OkButton>确定</OkButton>
      </Dialog>
    </Screen>
  );
}
